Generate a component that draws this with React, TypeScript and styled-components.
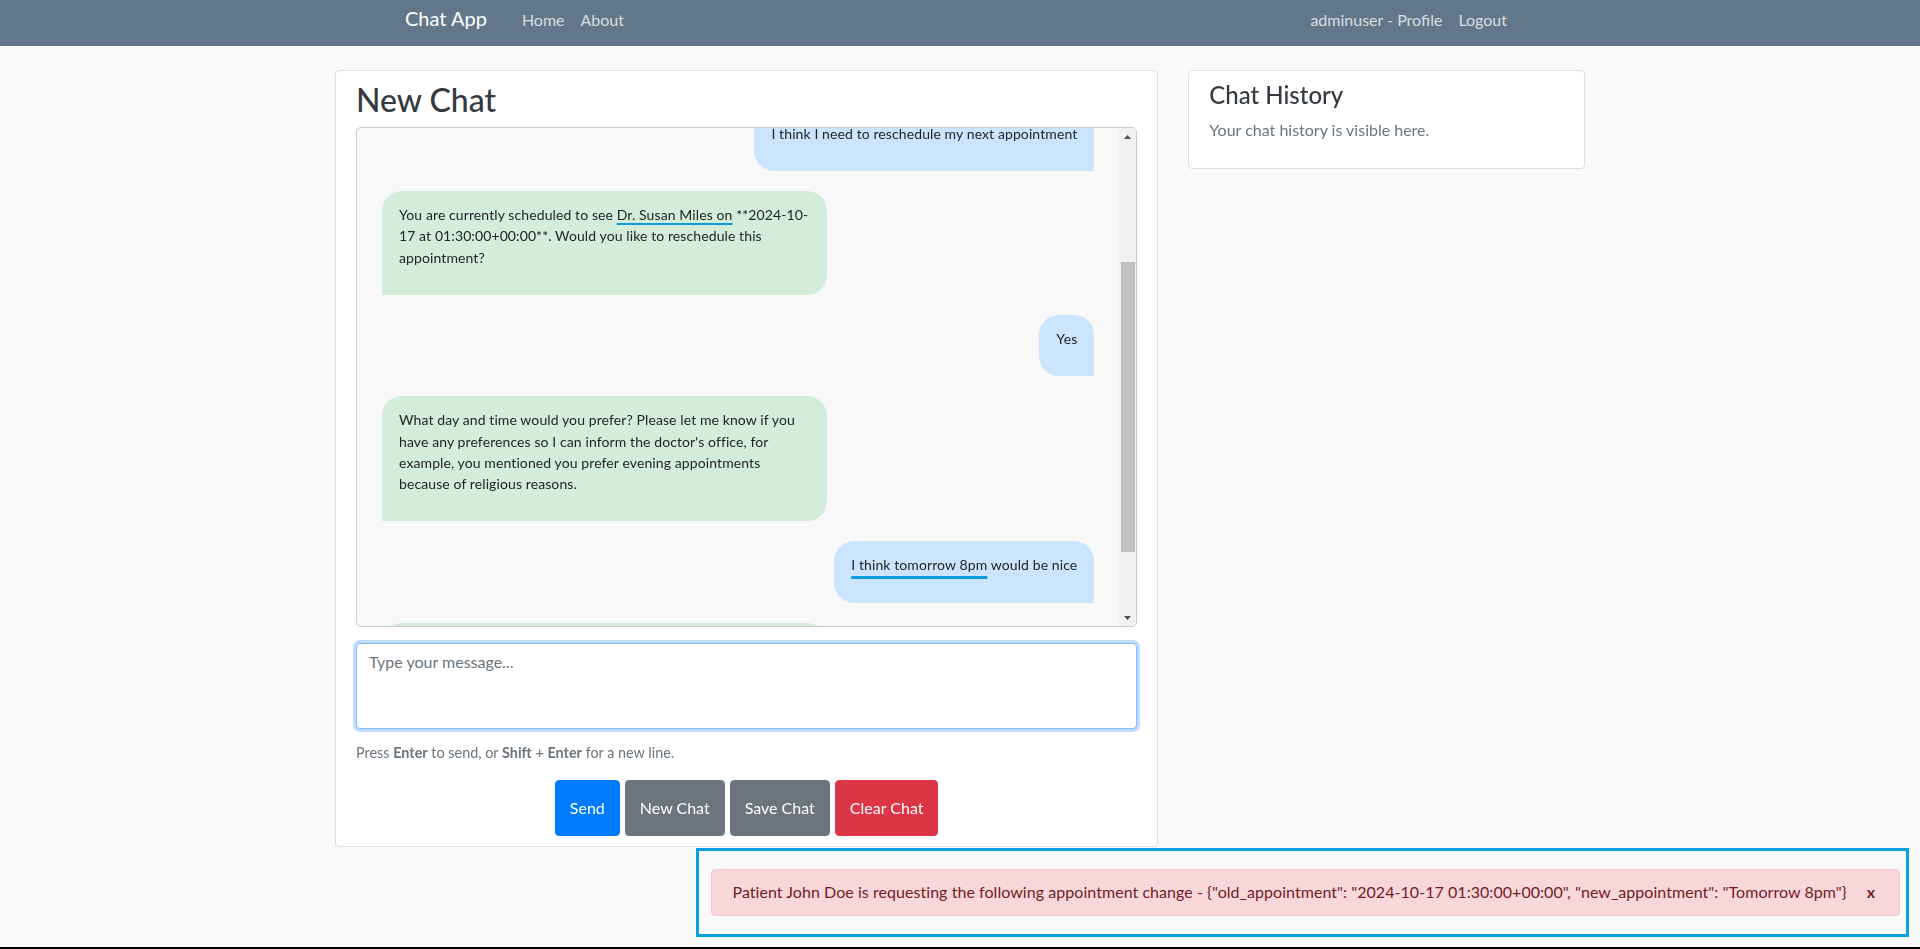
import React, { useLayoutEffect, useRef, useState } from "react";
import styled, { createGlobalStyle, css } from "styled-components";

const FONT = `"Segoe UI", "Lato", "Liberation Sans", sans-serif`;

const GlobalStyle = createGlobalStyle`
  *, *::before, *::after { box-sizing: border-box; }
  html, body { margin: 0; padding: 0; }
  body {
    background: #f9f9f9;
    font-family: ${FONT};
    font-size: 16px;
    line-height: 1.5;
    color: #212529;
  }
`;

/* ---------- Navbar ---------- */
const NavBar = styled.nav`
  background: #627789;
  height: 46px;
`;

const NavInner = styled.div`
  max-width: 1140px;
  margin: 0 auto;
  padding: 3px 15px 0;
  display: flex;
  align-items: baseline;
`;

const Brand = styled.a`
  font-size: 20px;
  line-height: 30px;
  color: #fff;
  text-decoration: none;
  margin-right: 27px;
`;

const NavLink = styled.a<{ $push?: boolean }>`
  color: rgba(255, 255, 255, 0.75);
  font-size: 16px;
  line-height: 24px;
  padding: 0 8px;
  text-decoration: none;
  ${(p) => p.$push && css`margin-left: auto;`}
`;

/* ---------- Layout ---------- */
const Main = styled.main`
  max-width: 1280px;
  margin: 24px auto 0;
  padding: 0 15px;
`;

const Row = styled.div`
  display: flex;
  align-items: flex-start;
  margin: 0 -15px;
`;

const Col = styled.div<{ $span: number }>`
  flex: 0 0 ${(p) => (p.$span / 12) * 100}%;
  max-width: ${(p) => (p.$span / 12) * 100}%;
  padding: 0 15px;
`;

const Card = styled.section`
  background: #fff;
  border: 1px solid #dfdfdf;
  border-radius: 4px;
  padding: 10px 20px;
`;

const Title = styled.h2`
  margin: 0 0 8px;
  font-size: 32px;
  font-weight: 500;
  line-height: 1.2;
  color: #343a40;
`;

const SubTitle = styled.h4`
  margin: 0 0 8px;
  font-size: 24px;
  font-weight: 500;
  line-height: 1.2;
  color: #343a40;
`;

const Muted = styled.p`
  margin: 0 0 16px;
  color: #6c757d;
`;

/* ---------- Chat window ---------- */
const ChatFrame = styled.div`
  display: flex;
  height: 500px;
  background: #f8f8f8;
  border: 1px solid #c9c9c9;
  border-radius: 5px;
  overflow: hidden;
`;

const ChatScroller = styled.div`
  position: relative;
  flex: 1;
  min-width: 0;
  overflow-y: auto;
  scrollbar-width: none;
  padding: 20px 25px;
  display: flex;
  flex-direction: column;
  gap: 20px;

  &::-webkit-scrollbar {
    display: none;
  }
`;

const ScrollBar = styled.div`
  flex: 0 0 17px;
  display: flex;
  flex-direction: column;
  background: #f1f1f1;
`;

const ScrollArrow = styled.div`
  flex: 0 0 17px;
  display: flex;
  align-items: center;
  justify-content: center;
  color: #505050;
`;

const ScrollTrack = styled.div`
  position: relative;
  flex: 1;
`;

const ScrollThumb = styled.div`
  position: absolute;
  left: 2px;
  right: 1px;
  background: #c1c1c1;
`;

const Bubble = styled.div<{ $from: "user" | "bot" }>`
  flex: none;
  max-width: 62.5%;
  padding: 13px 17px 27px;
  font-size: 14px;
  line-height: 1.52;
  letter-spacing: 0.1px;
  color: #212529;
  ${(p) =>
    p.$from === "user"
      ? css`
          align-self: flex-end;
          background: #cce5ff;
          border-radius: 20px 20px 0 20px;
        `
      : css`
          align-self: flex-start;
          width: 62.5%;
          background: #d4edda;
          border-radius: 20px 20px 20px 0;
        `}
`;

const Marked = styled.span<{ $offset: number; $thick: number }>`
  text-decoration: underline;
  text-decoration-color: #0a9bd8;
  text-decoration-thickness: ${(p) => p.$thick}px;
  text-underline-offset: ${(p) => p.$offset}px;
`;

/* ---------- Input area ---------- */
const MessageInput = styled.textarea`
  display: block;
  width: 100%;
  margin-top: 16px;
  height: 86px;
  padding: 6px 12px;
  font-family: ${FONT};
  font-size: 16px;
  line-height: 1.5;
  color: #495057;
  background: #fff;
  border: 1px solid #80bdff;
  border-radius: 4px;
  box-shadow: 0 0 0 3px rgba(0, 123, 255, 0.25);
  outline: none;
  resize: none;
  caret-color: #495057;

  &::placeholder {
    color: #6c757d;
  }
`;

const Hint = styled.p`
  margin: 13px 0 0;
  font-size: 14.4px;
  line-height: 1.5;
  color: #6c757d;

  b {
    font-weight: 700;
  }
`;

const ButtonRow = styled.div`
  display: flex;
  justify-content: center;
  gap: 5px;
  margin-top: 16px;
`;

const variants = {
  primary: "#007bff",
  secondary: "#6c757d",
  danger: "#dc3545",
};

const Button = styled.button<{ $variant: keyof typeof variants }>`
  font-family: ${FONT};
  font-size: 16px;
  line-height: 24px;
  padding: 15px 14px;
  color: #fff;
  background: ${(p) => variants[p.$variant]};
  border: 1px solid ${(p) => variants[p.$variant]};
  border-radius: 4px;
  cursor: pointer;
`;

/* ---------- Toast ---------- */
const ToastFrame = styled.div`
  position: fixed;
  right: 11px;
  bottom: 12px;
  border: 3px solid #0aa0e0;
  padding: 18px 6px 18px 12px;
`;

const Alert = styled.div`
  display: flex;
  align-items: center;
  padding: 10px 24px 11px 21px;
  background: #f8d7da;
  border: 1px solid #f5c6cb;
  border-radius: 4px;
  color: #721c24;
  font-size: 16px;
  line-height: 24px;
  letter-spacing: 0.05px;
  white-space: nowrap;
`;

const CloseButton = styled.button`
  margin-left: 20px;
  padding: 0;
  border: none;
  background: none;
  color: #721c24;
  font-family: ${FONT};
  font-size: 16px;
  font-weight: 700;
  line-height: 24px;
  cursor: pointer;
`;

const BottomEdge = styled.div`
  position: fixed;
  left: 0;
  right: 0;
  bottom: 0;
  height: 2px;
  background: #000;
`;

type Msg = { from: "user" | "bot"; body: React.ReactNode; anchor?: boolean };

const messages: Msg[] = [
  { from: "user", body: "Hi" },
  { from: "bot", body: "Hello! How can I help you today?" },
  { from: "user", body: "I think I need to reschedule my next appointment", anchor: true },
  {
    from: "bot",
    body: (
      <>
        You are currently scheduled to see{" "}
        <Marked $offset={3} $thick={2}>
          Dr. Susan Miles on
        </Marked>{" "}
        **2024-10-17 at 01:30:00+00:00**. Would you like to reschedule this appointment?
      </>
    ),
  },
  { from: "user", body: "Yes" },
  {
    from: "bot",
    body:
      "What day and time would you prefer? Please let me know if you have any preferences so I can inform the doctor's office, for example, you mentioned you prefer evening appointments because of religious reasons.",
  },
  {
    from: "user",
    body: (
      <>
        <Marked $offset={6} $thick={3}>
          I think tomorrow 8pm
        </Marked>{" "}
        would be nice
      </>
    ),
  },
  {
    from: "bot",
    body:
      "Thank you. I have sent your request to reschedule the appointment to tomorrow at 8pm to the doctor's office.",
  },
];

const ARROW = 17;

export default function App() {
  const scrollerRef = useRef<HTMLDivElement>(null);
  const anchorRef = useRef<HTMLDivElement>(null);
  const [thumb, setThumb] = useState({ top: 0, height: 0 });

  const measure = () => {
    const s = scrollerRef.current;
    if (!s) return;
    const track = s.clientHeight - ARROW * 2;
    setThumb({
      top: (track * s.scrollTop) / s.scrollHeight,
      height: (track * s.clientHeight) / s.scrollHeight,
    });
  };

  useLayoutEffect(() => {
    const s = scrollerRef.current;
    const a = anchorRef.current;
    if (s && a) s.scrollTop = a.offsetTop + 18;
    measure();
  }, []);

  return (
    <>
      <GlobalStyle />
      <NavBar>
        <NavInner>
          <Brand href="#">Chat App</Brand>
          <NavLink href="#">Home</NavLink>
          <NavLink href="#">About</NavLink>
          <NavLink href="#" $push>
            adminuser - Profile
          </NavLink>
          <NavLink href="#">Logout</NavLink>
        </NavInner>
      </NavBar>

      <Main>
        <Row>
          <Col $span={8}>
            <Card>
              <Title>New Chat</Title>
              <ChatFrame>
                <ChatScroller ref={scrollerRef} onScroll={measure}>
                  {messages.map((m, i) => (
                    <Bubble key={i} $from={m.from} ref={m.anchor ? anchorRef : undefined}>
                      {m.body}
                    </Bubble>
                  ))}
                </ChatScroller>
                <ScrollBar>
                  <ScrollArrow>
                    <svg width="7" height="4" viewBox="0 0 7 4">
                      <polygon points="0,4 3.5,0 7,4" fill="currentColor" />
                    </svg>
                  </ScrollArrow>
                  <ScrollTrack>
                    <ScrollThumb style={{ top: thumb.top, height: thumb.height }} />
                  </ScrollTrack>
                  <ScrollArrow>
                    <svg width="7" height="4" viewBox="0 0 7 4">
                      <polygon points="0,0 7,0 3.5,4" fill="currentColor" />
                    </svg>
                  </ScrollArrow>
                </ScrollBar>
              </ChatFrame>
              <MessageInput rows={3} placeholder="Type your message..." autoFocus />
              <Hint>
                Press <b>Enter</b> to send, or <b>Shift</b> + <b>Enter</b> for a new line.
              </Hint>
              <ButtonRow>
                <Button $variant="primary">Send</Button>
                <Button $variant="secondary">New Chat</Button>
                <Button $variant="secondary">Save Chat</Button>
                <Button $variant="danger">Clear Chat</Button>
              </ButtonRow>
            </Card>
          </Col>
          <Col $span={4}>
            <Card>
              <SubTitle>Chat History</SubTitle>
              <Muted>Your chat history is visible here.</Muted>
            </Card>
          </Col>
        </Row>
      </Main>

      <ToastFrame>
        <Alert>
          Patient John Doe is requesting the following appointment change - {"{"}"old_appointment":
          "2024-10-17 01:30:00+00:00", "new_appointment": "Tomorrow 8pm"{"}"}
          <CloseButton>x</CloseButton>
        </Alert>
      </ToastFrame>
      <BottomEdge />
    </>
  );
}
